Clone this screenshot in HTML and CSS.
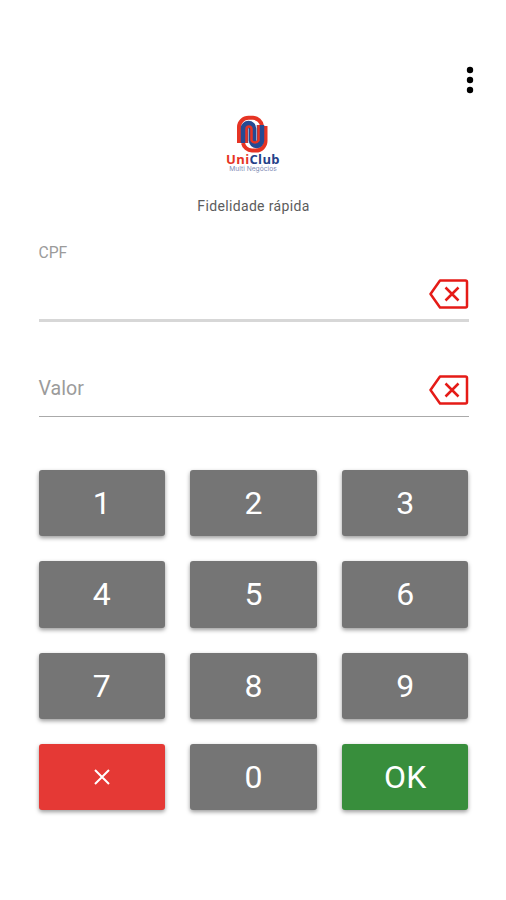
FILE: index.html
```html
<!DOCTYPE html>
<html lang="pt-BR">
<head>
<meta charset="utf-8">
<title>UniClub</title>
<link rel="stylesheet" href="styles.css">
</head>
<body>
<main class="screen">
  <header class="topbar">
    <svg class="more" viewBox="0 0 8 28"><circle cx="4" cy="4" r="3.2"/><circle cx="4" cy="14" r="3.2"/><circle cx="4" cy="24" r="3.2"/></svg>
  </header>
  <section class="brand">
    <svg class="mark" viewBox="0 0 32 38" fill="none">
      <path d="M3 28V12A9.500 9.500 0 0 1 12.500 2.800H17A9.500 9.500 0 0 1 26 11" stroke="#e63424" stroke-width="4"/>
      <path d="M29.500 11V26A9.500 9.500 0 0 1 20 35.500H16A9.500 9.500 0 0 1 7 28" stroke="#e63424" stroke-width="4"/>
      <path d="M8.500 28V13.500A4 4 0 0 1 16.500 13.500V25.500A4 4 0 0 0 24.500 25.500V10" stroke="#244a93" stroke-width="7.500"/>
      <path d="M10.500 28V14A2.500 2.500 0 0 1 15.500 14V25.500A4 4 0 0 0 22.500 25.500V10" stroke="#e63424" stroke-width="2.500"/>
    </svg>
    <div class="name"><span>Uni</span>Club</div>
    <div class="tagline">Multi Negócios</div>
  </section>
  <h1 class="title">Fidelidade rápida</h1>
  <div class="field field-cpf">
    <label>CPF</label>
    <svg class="erase" viewBox="0 0 40 30"><path d="M11 1.500H36.500Q38 1.500 38 3V27Q38 28.500 36.500 28.500H11L1.500 15ZM16.500 8.500L29.500 21.500M29.500 8.500L16.500 21.500"/></svg>
  </div>
  <div class="field field-value">
    <label>Valor</label>
    <svg class="erase" viewBox="0 0 40 30"><path d="M11 1.500H36.500Q38 1.500 38 3V27Q38 28.500 36.500 28.500H11L1.500 15ZM16.500 8.500L29.500 21.500M29.500 8.500L16.500 21.500"/></svg>
  </div>
  <section class="keypad">
    <button>1</button><button>2</button><button>3</button>
    <button>4</button><button>5</button><button>6</button>
    <button>7</button><button>8</button><button>9</button>
    <button class="cancel"><svg viewBox="0 0 16 16"><path d="M1 1L15 15M15 1L1 15"/></svg></button><button>0</button><button class="ok">OK</button>
  </section>
</main>
</body>
</html>
```
FILE: styles.css
```css
* { box-sizing: border-box; }
body { margin: 0; background: #fff; font-family: Roboto, sans-serif; }
.screen { height: 900px; padding: 66px 37.500px 0 38.500px; overflow: hidden; }
.topbar { display: flex; justify-content: flex-end; height: 49px; }
.more { width: 8px; height: 28px; margin-right: -5.500px; }
.brand { display: flex; flex-direction: column; align-items: center; height: 79px; }
.mark { width: 32px; height: 38px; margin-left: -3px; }
.name { height: 12px; margin-left: -1px; font: 700 13px/12px "Open Sans", sans-serif; color: #253f88; letter-spacing: .35px; }
.name span { color: #e63424; }
.tagline { font: 6.700px/8px Inter, sans-serif; color: #7f8cb5; margin-left: -1px; }
.title { margin: 0; height: 46px; font-size: 14px; line-height: 24px; font-weight: 400; color: #5c5c5c; text-align: center; letter-spacing: .35px; }
.field { display: flex; justify-content: space-between; color: #9b9b9b; }
.field-cpf { height: 82px; border-bottom: 3px solid #d7d7d7; }
.field-cpf label { font-size: 15.700px; line-height: 26px; }
.field-cpf .erase { margin-top: 39px; }
.field-value { height: 95px; border-bottom: 1.500px solid #aaa; }
.field-value label { margin-top: 53px; font-size: 19.600px; line-height: 27px; }
.field-value .erase { margin-top: 53px; }
.erase { width: 40px; height: 30px; fill: none; stroke: #e51b17; stroke-width: 2.500; stroke-linejoin: round; }
.keypad { margin-top: 53px; display: grid; grid-template-columns: repeat(3, 1fr); grid-auto-rows: 66.300px; gap: 25px; }
button { display: flex; align-items: center; justify-content: center; padding: 0; border: 0; border-radius: 3px; background: #757575; color: #fff; font: 400 32px/66px Roboto, sans-serif; box-shadow: 0 2px 4px rgba(0,0,0,.4); }
button svg { width: 16px; height: 16px; stroke: #fff; stroke-width: 2; }
.cancel { background: #e53935; }
.ok { background: #388e3c; }
```
